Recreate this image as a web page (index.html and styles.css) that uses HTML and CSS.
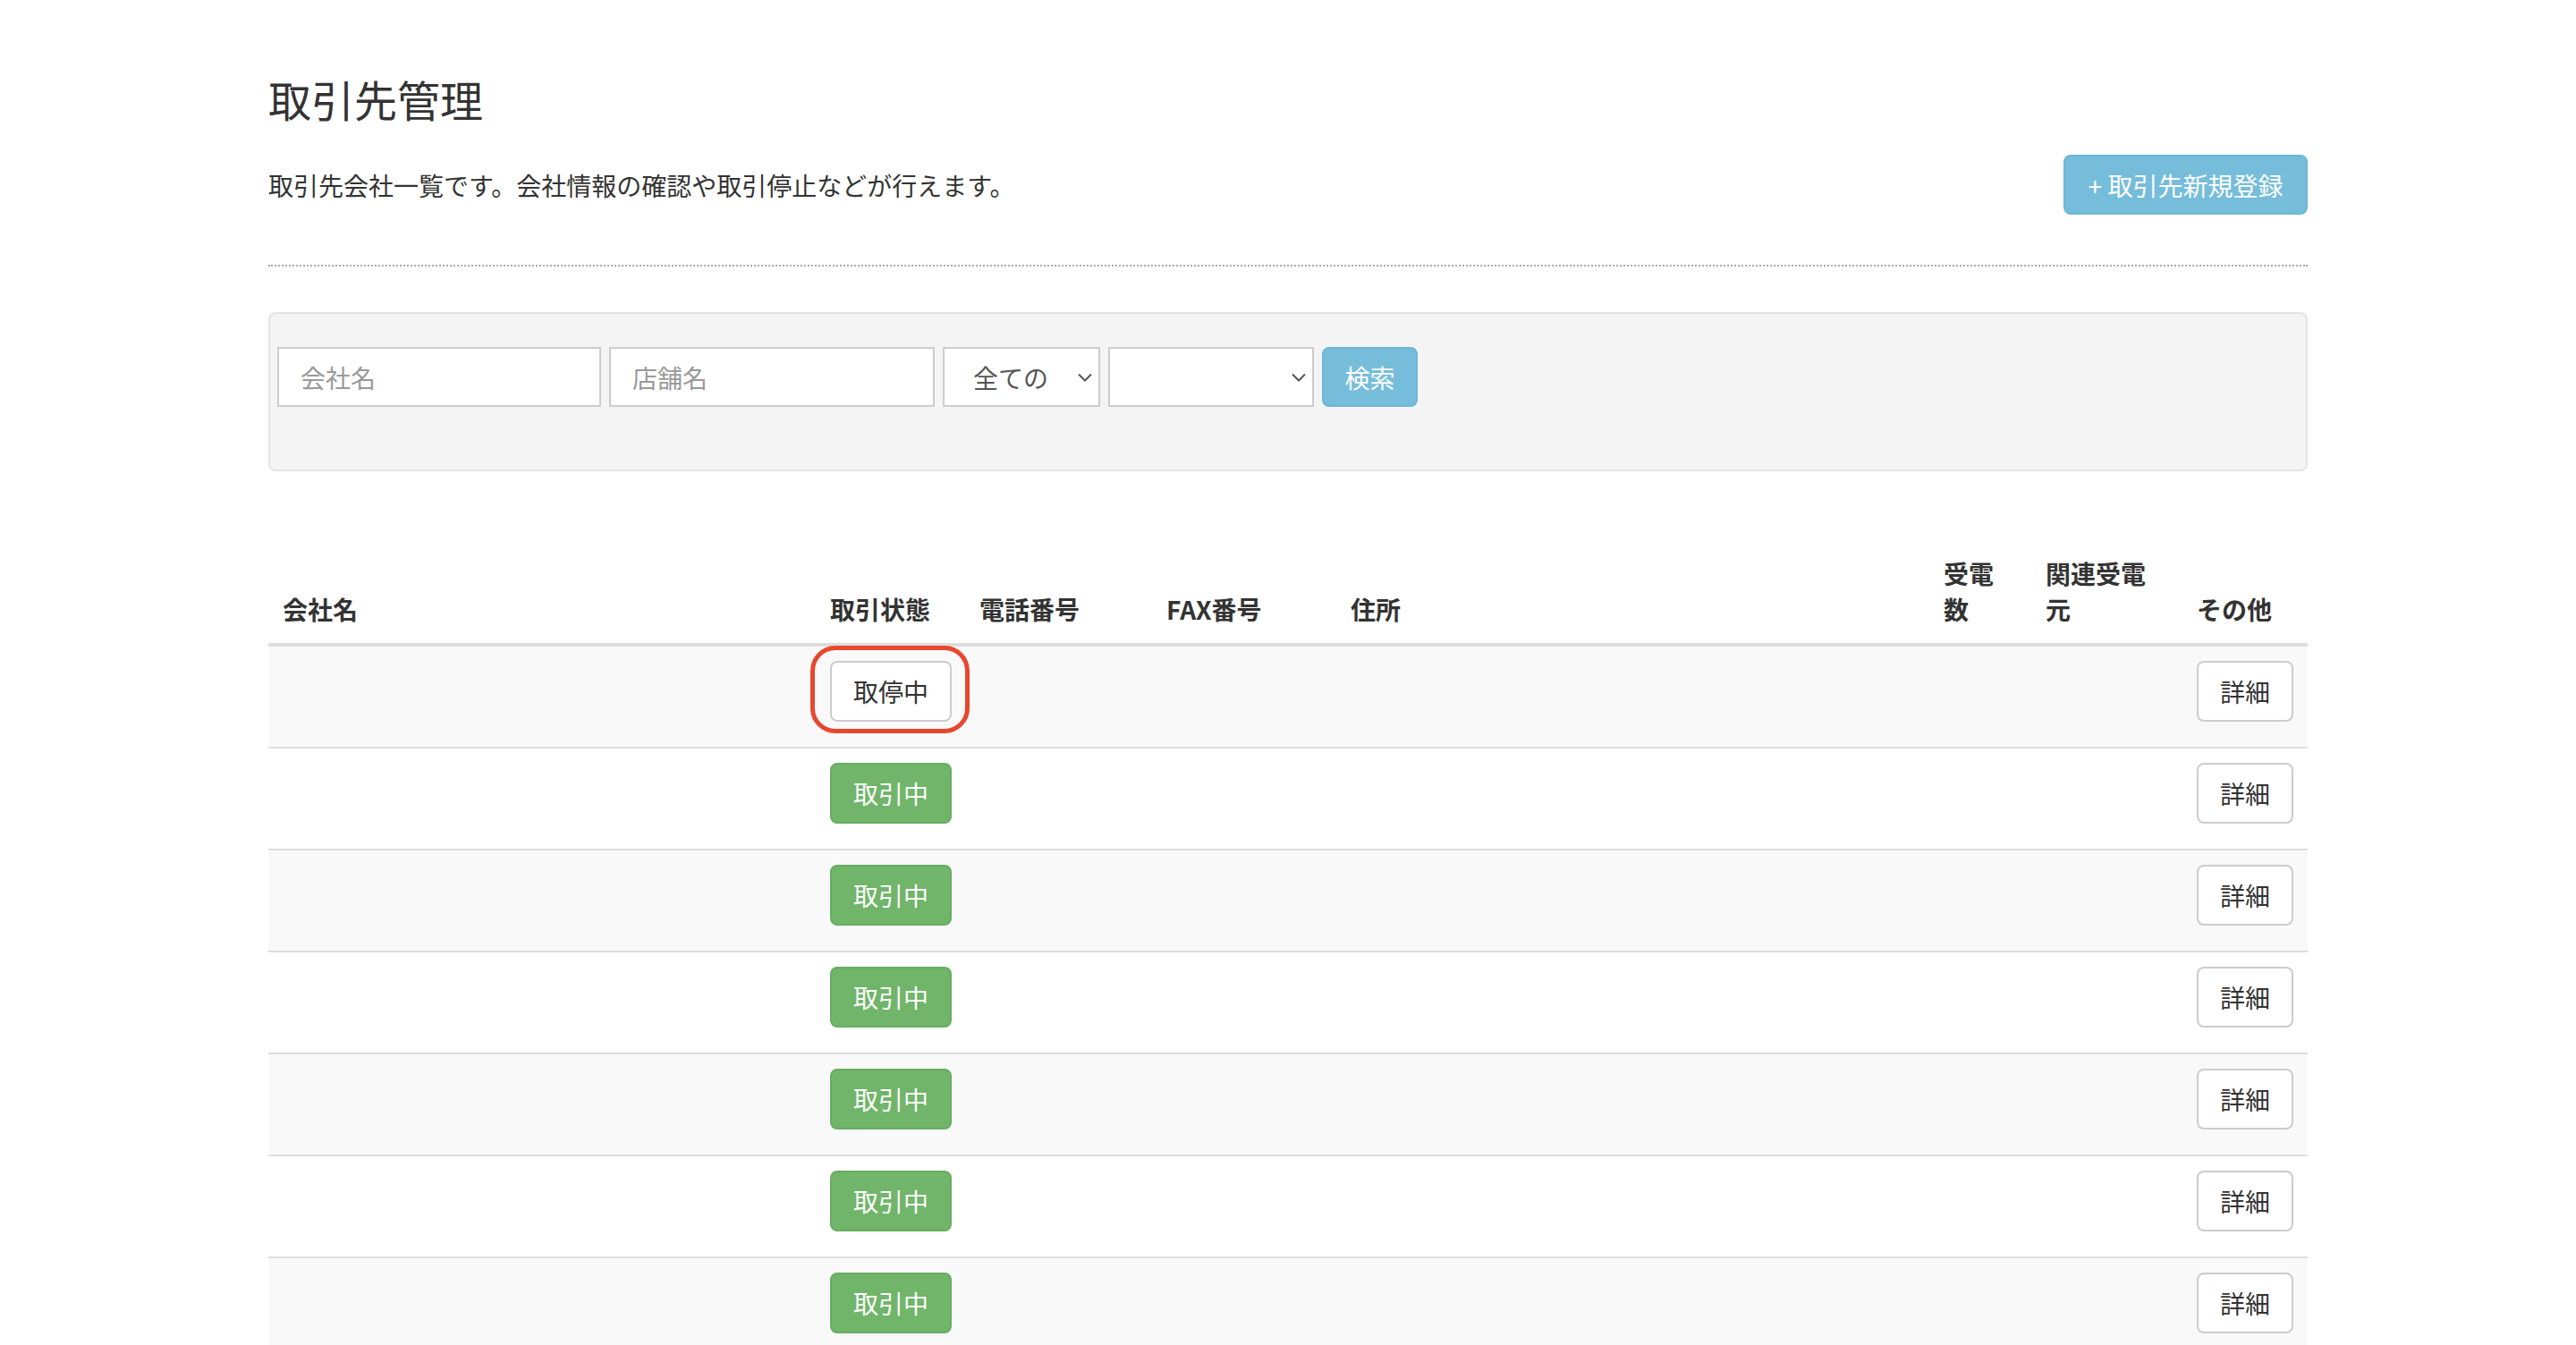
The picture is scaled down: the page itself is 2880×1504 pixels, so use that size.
FILE: index.html
```html
<!DOCTYPE html>
<html lang="ja">
<head>
<meta charset="utf-8">
<title>取引先管理</title>
<link rel="stylesheet" href="styles.css">
</head>
<body>
<div class="container">
  <h1 class="page-title">取引先管理</h1>
  <div class="header-row">
    <p class="lead-text">取引先会社一覧です。会社情報の確認や取引停止などが行えます。</p>
    <button class="btn btn-info btn-new">+ 取引先新規登録</button>
  </div>
  <hr class="divider">
  <div class="well">
    <form class="search-form">
      <input class="form-control input-company" type="text" placeholder="会社名">
      <input class="form-control input-shop" type="text" placeholder="店舗名">
      <div class="select-wrap select-status">
        <select class="form-control"><option>全ての</option></select>
        <svg class="chevron" width="16" height="10" viewBox="0 0 16 10"><path d="M1 1.5 L8 8.5 L15 1.5" fill="none" stroke="#555" stroke-width="2"/></svg>
      </div>
      <div class="select-wrap select-other">
        <select class="form-control"><option></option></select>
        <svg class="chevron" width="16" height="10" viewBox="0 0 16 10"><path d="M1 1.5 L8 8.5 L15 1.5" fill="none" stroke="#555" stroke-width="2"/></svg>
      </div>
      <button type="button" class="btn btn-info btn-search">検索</button>
    </form>
  </div>

  <table class="client-table">
    <colgroup>
      <col class="c-name"><col class="c-state"><col class="c-tel"><col class="c-fax"><col class="c-addr"><col class="c-calls"><col class="c-rel"><col class="c-other">
    </colgroup>
    <thead>
      <tr>
        <th>会社名</th>
        <th>取引状態</th>
        <th>電話番号</th>
        <th>FAX番号</th>
        <th>住所</th>
        <th>受電<br>数</th>
        <th>関連受電<br>元</th>
        <th>その他</th>
      </tr>
    </thead>
    <tbody>
      <tr>
        <td></td>
        <td><span class="state-wrap"><button class="btn btn-default btn-state">取停中</button><span class="highlight"></span></span></td>
        <td></td><td></td><td></td><td></td><td></td>
        <td><button class="btn btn-default btn-detail">詳細</button></td>
      </tr>
      <tr>
        <td></td>
        <td><button class="btn btn-success btn-state">取引中</button></td>
        <td></td><td></td><td></td><td></td><td></td>
        <td><button class="btn btn-default btn-detail">詳細</button></td>
      </tr>
      <tr>
        <td></td>
        <td><button class="btn btn-success btn-state">取引中</button></td>
        <td></td><td></td><td></td><td></td><td></td>
        <td><button class="btn btn-default btn-detail">詳細</button></td>
      </tr>
      <tr>
        <td></td>
        <td><button class="btn btn-success btn-state">取引中</button></td>
        <td></td><td></td><td></td><td></td><td></td>
        <td><button class="btn btn-default btn-detail">詳細</button></td>
      </tr>
      <tr>
        <td></td>
        <td><button class="btn btn-success btn-state">取引中</button></td>
        <td></td><td></td><td></td><td></td><td></td>
        <td><button class="btn btn-default btn-detail">詳細</button></td>
      </tr>
      <tr>
        <td></td>
        <td><button class="btn btn-success btn-state">取引中</button></td>
        <td></td><td></td><td></td><td></td><td></td>
        <td><button class="btn btn-default btn-detail">詳細</button></td>
      </tr>
      <tr>
        <td></td>
        <td><button class="btn btn-success btn-state">取引中</button></td>
        <td></td><td></td><td></td><td></td><td></td>
        <td><button class="btn btn-default btn-detail">詳細</button></td>
      </tr>
      <tr>
        <td></td>
        <td><button class="btn btn-success btn-state">取引中</button></td>
        <td></td><td></td><td></td><td></td><td></td>
        <td><button class="btn btn-default btn-detail">詳細</button></td>
      </tr>
    </tbody>
  </table>
</div>
</body>
</html>
```

FILE: styles.css
```css
* { box-sizing: border-box; }

html, body {
  margin: 0;
  padding: 0;
  background: #fff;
}

body {
  font-family: "Noto Sans CJK JP", "Noto Sans", sans-serif;
  font-size: 28px;
  line-height: 40px;
  color: #333;
}

.container {
  width: 2280px;
  margin: 0 auto;
}

.page-title {
  margin: 0;
  padding-top: 82px;
  font-size: 48px;
  line-height: 56px;
  font-weight: 400;
  color: #333;
}

.header-row {
  margin-top: 35px;
  height: 67px;
  display: flex;
  align-items: center;
  justify-content: space-between;
}

.lead-text {
  margin: 0;
  font-size: 28px;
  line-height: 40px;
}

.divider {
  margin: 56px 0 0;
  border: 0;
  border-top: 2px dotted #aaa;
  height: 0;
}

.btn {
  font-family: inherit;
  font-size: 28px;
  line-height: 40px;
  border-radius: 8px;
  border: 2px solid transparent;
  padding: 12px 24px;
  cursor: pointer;
  white-space: nowrap;
}

.btn-info {
  background: #76bddb;
  border-color: #6cb6d7;
  color: #fff;
}

.btn-success {
  background: #70b56a;
  border-color: #67ad61;
  color: #fff;
}

.btn-default {
  background: #fff;
  border-color: #ccc;
  color: #333;
}

.btn-new {
  width: 273px;
  height: 67px;
  padding: 0;
}

.well {
  margin-top: 51px;
  background: #f4f4f4;
  border: 2px solid #e3e3e3;
  border-radius: 8px;
  padding: 37px 8px 70px;
}

.search-form {
  display: flex;
  gap: 9px;
  margin: 0;
}

.form-control {
  height: 67px;
  border: 2px solid #ccc;
  border-radius: 0;
  background: #fff;
  font-family: inherit;
  font-size: 28px;
  color: #555;
  padding: 0 24px;
  outline: none;
}

.form-control::placeholder {
  color: #999;
}

.input-company { width: 362px; }
.input-shop { width: 364px; }

.select-wrap {
  position: relative;
}

.select-wrap select {
  -webkit-appearance: none;
  appearance: none;
  width: 100%;
  padding-left: 32px;
}

.select-status { width: 176px; }
.select-other { width: 230px; }

.chevron {
  position: absolute;
  right: 9px;
  top: 29px;
  pointer-events: none;
}

.btn-search {
  width: 107px;
  height: 67px;
  padding: 0;
}

.client-table {
  margin-top: 78px;
  width: 2280px;
  table-layout: fixed;
  border-collapse: collapse;
  border-spacing: 0;
}

.c-name { width: 612px; }
.c-state { width: 167px; }
.c-tel { width: 209px; }
.c-fax { width: 206px; }
.c-addr { width: 663px; }
.c-calls { width: 114px; }
.c-rel { width: 171px; }
.c-other { width: 138px; }

.client-table th {
  text-align: left;
  vertical-align: bottom;
  font-weight: 700;
  font-size: 28px;
  line-height: 40px;
  padding: 16px 16px 18px;
  border-bottom: 4px solid #ddd;
  color: #333;
}

.client-table th:last-child {
  padding-left: 14px;
}

.client-table td {
  vertical-align: top;
  padding: 16px 16px 28px;
  border-top: 2px solid #ddd;
  height: 114px;
}

.client-table td:last-child {
  padding-left: 14px;
}

.client-table tbody tr:nth-child(odd) td {
  background: #f9f9f9;
}

.btn-state {
  width: 136px;
  height: 68px;
  padding: 0;
}

.btn-detail {
  width: 108px;
  height: 68px;
  padding: 0;
}

.state-wrap {
  position: relative;
  display: inline-block;
}

.state-wrap .btn-state {
  display: block;
}

.highlight {
  position: absolute;
  left: -22px;
  top: -17px;
  width: 178px;
  height: 98px;
  border: 5px solid #e8472f;
  border-radius: 28px;
  pointer-events: none;
}
```
